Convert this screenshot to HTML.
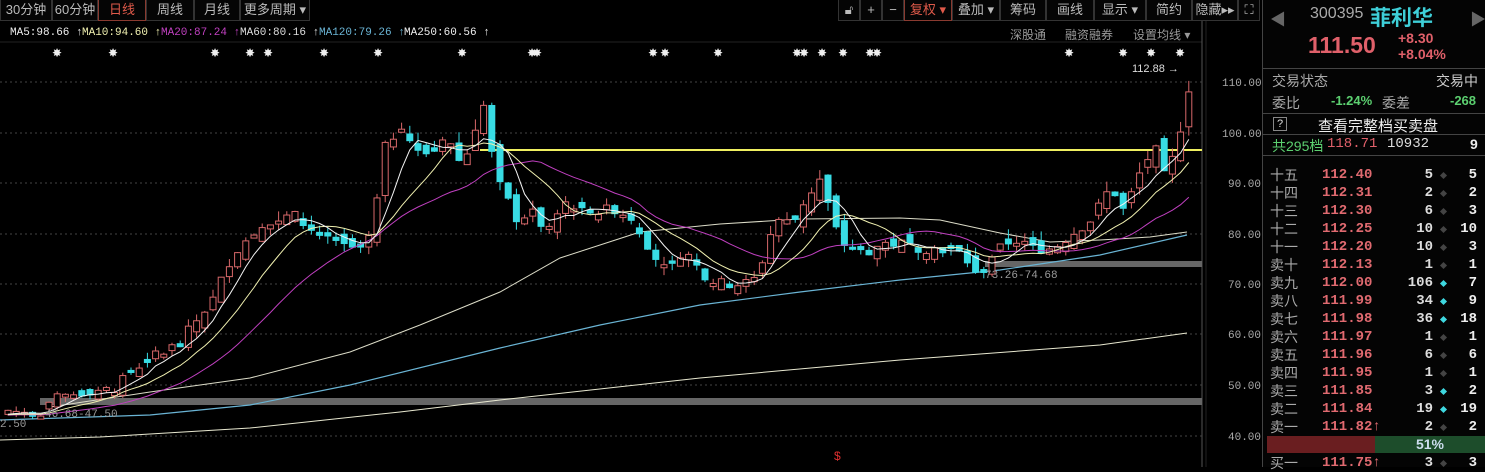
<!DOCTYPE html>
<html><head><meta charset="utf-8">
<style>
*{margin:0;padding:0;box-sizing:border-box}
body{width:1485px;height:467px;background:#000;overflow:hidden;position:relative;font-family:"Liberation Sans","Noto Sans CJK SC",sans-serif;color:#c8c8c8}
.t{position:absolute;white-space:nowrap}
.tb{position:absolute;top:0;height:21px;border:1px solid #333;border-top:none;font-size:13px;line-height:20px;text-align:center;color:#bbb;background:#050505}
.ma{position:absolute;top:26px;font-family:"Liberation Mono",monospace;font-size:11px;line-height:14px}
.rp{position:absolute;left:1262px;top:0;width:223px;height:467px;border-left:1px solid #444;background:#040404}
.row{position:absolute;left:1262px;width:223px;height:18px;font-size:14px;line-height:18px}
.row .a{position:absolute;left:8px;color:#aaa}
.row .b{position:absolute;left:60px;color:#e06a70;font-family:"Liberation Mono",monospace;font-weight:bold}
.row .c{position:absolute;right:52px;color:#ddd;font-family:"Liberation Mono",monospace;font-weight:bold}
.row .d{position:absolute;right:39px;top:7px;width:5px;height:5px;background:#444;transform:rotate(45deg)}
.row .d.cy{background:#3ed8e0}
.row .e{position:absolute;right:8px;color:#eee;font-family:"Liberation Mono",monospace;font-weight:bold}
</style></head><body>
<svg id="ch" width="1262" height="467" style="position:absolute;left:0;top:0">
<line x1="0" y1="42" x2="1202" y2="42" stroke="#222"/>
<line x1="1202" y1="21" x2="1202" y2="467" stroke="#555"/>
<line x1="1206" y1="21" x2="1206" y2="467" stroke="#222"/>
<g stroke="#444" stroke-dasharray="2,3">
<line x1="0" y1="82" x2="1202" y2="82"/><line x1="0" y1="133" x2="1202" y2="133"/><line x1="0" y1="183" x2="1202" y2="183"/><line x1="0" y1="234" x2="1202" y2="234"/><line x1="0" y1="284" x2="1202" y2="284"/><line x1="0" y1="334" x2="1202" y2="334"/><line x1="0" y1="385" x2="1202" y2="385"/><line x1="0" y1="436" x2="1202" y2="436"/>
</g>
<g fill="#aaa" font-family="Liberation Mono,monospace" font-size="11">
<text x="1222" y="86">110.00</text><text x="1222" y="137">100.00</text><text x="1228" y="187">90.00</text><text x="1228" y="238">80.00</text><text x="1228" y="288">70.00</text><text x="1228" y="338">60.00</text><text x="1228" y="389">50.00</text><text x="1228" y="440">40.00</text>
</g>
<rect x="40" y="398" width="1162" height="7" fill="#666"/>
<rect x="985" y="261" width="217" height="6" fill="#666"/>
<line x1="480" y1="150" x2="1202" y2="150" stroke="#f0f060" stroke-width="2"/>
<polyline fill="none" stroke="#e8e8d0" stroke-width="1" points="0,440 100,437 250,428 400,412 500,400 700,378 900,360 1100,345 1187,333"/>
<polyline fill="none" stroke="#6ab4d4" stroke-width="1.2" points="0,420 150,415 250,405 350,385 500,348 600,325 700,305 800,292 900,280 980,272 1000,270 1100,255 1187,235"/>
<polyline fill="none" stroke="#dcdcc8" stroke-width="1" points="50,407 150,392 250,378 350,352 420,325 500,292 560,258 640,232 720,224 800,219 900,218 940,220 1000,233 1050,242 1100,240 1150,237 1187,232"/>
<g id="cg"></g>
<g fill="#ddd" font-size="11" font-family="Liberation Sans,sans-serif"><text x="1132" y="72">112.88 →</text></g>
<g fill="#999" font-size="11" font-family="Liberation Mono,monospace"><text x="45" y="417">46.68-47.50</text><text x="985" y="278">73.26-74.68</text><text x="0" y="427">2.50</text></g>
<text x="834" y="460" fill="#e03030" font-size="12">$</text>
<g fill="#eee" font-size="12" font-family="DejaVu Sans,sans-serif" id="stars"></g>
</svg>
<div class="tb" style="left:0;width:52px">30分钟</div>
<div class="tb" style="left:52px;width:46px">60分钟</div>
<div class="tb" style="left:98px;width:48px;color:#e05a4a;border-color:#8a3a30">日线</div>
<div class="tb" style="left:146px;width:48px">周线</div>
<div class="tb" style="left:194px;width:46px">月线</div>
<div class="tb" style="left:240px;width:70px">更多周期 ▾</div>
<div class="tb" style="left:838px;width:22px">🔓︎</div>
<div class="tb" style="left:860px;width:22px">+</div>
<div class="tb" style="left:882px;width:22px">−</div>
<div class="tb" style="left:904px;width:48px;color:#e05a4a;border-color:#8a3a30">复权 ▾</div>
<div class="tb" style="left:952px;width:48px">叠加 ▾</div>
<div class="tb" style="left:1000px;width:46px">筹码</div>
<div class="tb" style="left:1046px;width:48px">画线</div>
<div class="tb" style="left:1094px;width:52px">显示 ▾</div>
<div class="tb" style="left:1146px;width:46px">简约</div>
<div class="tb" style="left:1192px;width:46px">隐藏▸▸</div>
<div class="tb" style="left:1238px;width:22px">⛶</div>
<div class="ma" style="left:10px;color:#eee">MA5:98.66 ↑</div>
<div class="ma" style="left:82px;color:#f0f0b0">MA10:94.60 ↑</div>
<div class="ma" style="left:161px;color:#c040c0">MA20:87.24 ↑</div>
<div class="ma" style="left:240px;color:#ddd">MA60:80.16 ↑</div>
<div class="ma" style="left:319px;color:#6ab4d4">MA120:79.26 ↑</div>
<div class="ma" style="left:404px;color:#eee">MA250:60.56 ↑</div>
<div class="t" style="left:1010px;top:26px;font-size:12px;color:#999">深股通</div>
<div class="t" style="left:1065px;top:26px;font-size:12px;color:#999">融资融券</div>
<div class="t" style="left:1133px;top:26px;font-size:12px;color:#999">设置均线 ▾</div>
<div class="rp"></div>
<div class="t" style="left:1270px;top:6px;font-size:16px;color:#666">◀</div>
<div class="t" style="left:1470px;top:6px;font-size:16px;color:#666">▶</div>
<div class="t" style="left:1310px;top:5px;font-size:16px;color:#aaa">300395</div>
<div class="t" style="left:1370px;top:2px;font-size:21px;color:#3ecfd8;font-weight:bold">菲利华</div>
<div class="t" style="left:1308px;top:32px;font-size:23px;color:#e0606a;font-weight:bold">111.50</div>
<div class="t" style="left:1398px;top:30px;font-size:14px;color:#e0606a;font-weight:bold">+8.30</div>
<div class="t" style="left:1398px;top:46px;font-size:14px;color:#e0606a;font-weight:bold">+8.04%</div>
<div style="position:absolute;left:1262px;top:68px;width:223px;border-top:1px solid #444"></div>
<div class="t" style="left:1272px;top:71px;font-size:14px;color:#aaa">交易状态</div>
<div class="t" style="left:1436px;top:71px;font-size:14px;color:#ccc">交易中</div>
<div class="t" style="left:1272px;top:93px;font-size:14px;color:#aaa">委比</div>
<div class="t" style="left:1331px;top:93px;font-size:13px;color:#5cd070;font-weight:bold">-1.24%</div>
<div class="t" style="left:1382px;top:93px;font-size:14px;color:#aaa">委差</div>
<div class="t" style="left:1450px;top:93px;font-size:13px;color:#5cd070;font-weight:bold">-268</div>
<div style="position:absolute;left:1262px;top:113px;width:223px;border-top:1px solid #444"></div>
<div class="t" style="left:1273px;top:117px;width:14px;height:14px;border:1px solid #888;font-size:11px;line-height:12px;text-align:center;color:#ddd">?</div>
<div class="t" style="left:1318px;top:115px;font-size:15px;color:#eee">查看完整档买卖盘</div>
<div style="position:absolute;left:1262px;top:134px;width:223px;border-top:1px solid #444"></div>
<div class="t" style="left:1272px;top:136px;font-size:14px;color:#5cd070">共295档</div>
<div class="t" style="left:1327px;top:136px;font-size:14px;color:#e0606a;font-family:'Liberation Mono',monospace">118.71</div>
<div class="t" style="left:1387px;top:136px;font-size:14px;color:#ddd;font-family:'Liberation Mono',monospace">10932</div>
<div class="t" style="left:1470px;top:136px;font-size:14px;color:#eee;font-weight:bold">9</div>
<div style="position:absolute;left:1262px;top:155px;width:223px;border-top:1px solid #444"></div>
<div id="ob"></div>
<div style="position:absolute;left:1267px;top:436px;width:108px;height:17px;background:#6a1e20"></div>
<div style="position:absolute;left:1375px;top:436px;width:110px;height:17px;background:#1d4d2b;color:#cde;font-size:14px;line-height:17px;text-align:center;font-weight:bold">51%</div>
<script>
var ob=[["十五","112.40","5","5",0],["十四","112.31","2","2",0],["十三","112.30","6","3",0],["十二","112.25","10","10",0],["十一","112.20","10","3",0],["卖十","112.13","1","1",0],["卖九","112.00","106","7",1],["卖八","111.99","34","9",1],["卖七","111.98","36","18",1],["卖六","111.97","1","1",0],["卖五","111.96","6","6",0],["卖四","111.95","1","1",0],["卖三","111.85","3","2",1],["卖二","111.84","19","19",1],["卖一","111.82↑","2","2",0]];
var h="";ob.forEach(function(r,i){h+='<div class="row" style="top:'+(166+i*18)+'px"><span class="a">'+r[0]+'</span><span class="b">'+r[1]+'</span><span class="c">'+r[2]+'</span><span class="d'+(r[4]?' cy':'')+'"></span><span class="e">'+r[3]+'</span></div>';});
h+='<div class="row" style="top:454px"><span class="a">买一</span><span class="b">111.75↑</span><span class="c">3</span><span class="d"></span><span class="e">3</span></div>';
document.getElementById("ob").innerHTML=h;
var kp=[[5,45],[40,44.5],[55,47.5],[90,49],[110,49],[130,53],[160,57],[175,58],[210,67],[230,76],[250,80],[270,82],[290,84],[300,82],[315,80],[330,78],[350,77],[362,76],[372,84],[382,97],[400,102],[412,96],[430,96],[442,100],[460,93],[470,100],[482,106],[492,91],[502,88],[512,83],[530,84],[545,80],[560,86],[572,85],[590,84],[610,85],[630,83],[650,76],[665,72],[680,77],[700,72],[720,70],[740,70],[752,71],[762,76],[772,83],[790,82],[800,86],[818,91],[830,82],[840,78],[860,76],[880,78],[900,78],[920,77],[940,77],[960,76],[975,71],[990,76],[1010,79],[1030,77],[1050,77],[1070,80],[1090,83],[1102,88],[1112,88],[1122,84],[1132,90],[1142,94],[1152,97],[1162,91],[1172,96],[1180,103],[1188,111]];
function interp(x){for(var i=0;i<kp.length-1;i++){if(x<=kp[i+1][0]){var t=(x-kp[i][0])/(kp[i+1][0]-kp[i][0]);return kp[i][1]+t*(kp[i+1][1]-kp[i][1]);}}return kp[kp.length-1][1];}
function Y(p){return 82+(110-p)*5.05;}
var seed=7;function rnd(){seed=(seed*9301+49297)%233280;return seed/233280;}
var s="",closes=[],xs=[],prev=44;
for(var i=0;i<40;i++)closes.push(44);
for(var x=5;x<=1188;x+=8.2){var c=interp(x)+(rnd()-0.5)*2;var o=prev+(rnd()-0.5)*3;if(Math.abs(o-c)<0.4)o=c+(rnd()>0.5?0.6:-0.6);
var hi=Math.max(o,c)+rnd()*c*0.025,lo=Math.min(o,c)-rnd()*c*0.02;var up=c>=o;
var col=up?"#d8686a":"#38dce4";
s+='<line x1="'+(x+3)+'" y1="'+Y(hi)+'" x2="'+(x+3)+'" y2="'+Y(lo)+'" stroke="'+col+'"/>';
var t=Y(Math.max(o,c)),b=Y(Math.min(o,c));
s+='<rect x="'+x+'" y="'+t+'" width="6" height="'+Math.max(1,b-t)+'" fill="'+(up?"#000":col)+'" stroke="'+col+'"/>';
closes.push(c);xs.push(x+3);prev=c;}
function ma(n,color){var pts=[];for(var i=0;i<xs.length;i++){var k=i+40,sum=0;for(var j=0;j<n;j++)sum+=closes[k-j];pts.push(xs[i]+","+Y(sum/n).toFixed(1));}
return '<polyline fill="none" stroke="'+color+'" points="'+pts.join(" ")+'"/>';}
s+=ma(20,"#c040c0")+ma(10,"#f0f0b0")+ma(5,"#f4f4f4");
document.getElementById("cg").innerHTML=s;
var st=[57,113,215,250,268,324,378,462,532,537,653,665,718,797,804,822,843,870,877,1069,1123,1151,1180];
var ss="";st.forEach(function(x){ss+='<text x="'+(x-5)+'" y="57">✸</text>';});
document.getElementById("stars").innerHTML=ss;
</script>
</body></html>
